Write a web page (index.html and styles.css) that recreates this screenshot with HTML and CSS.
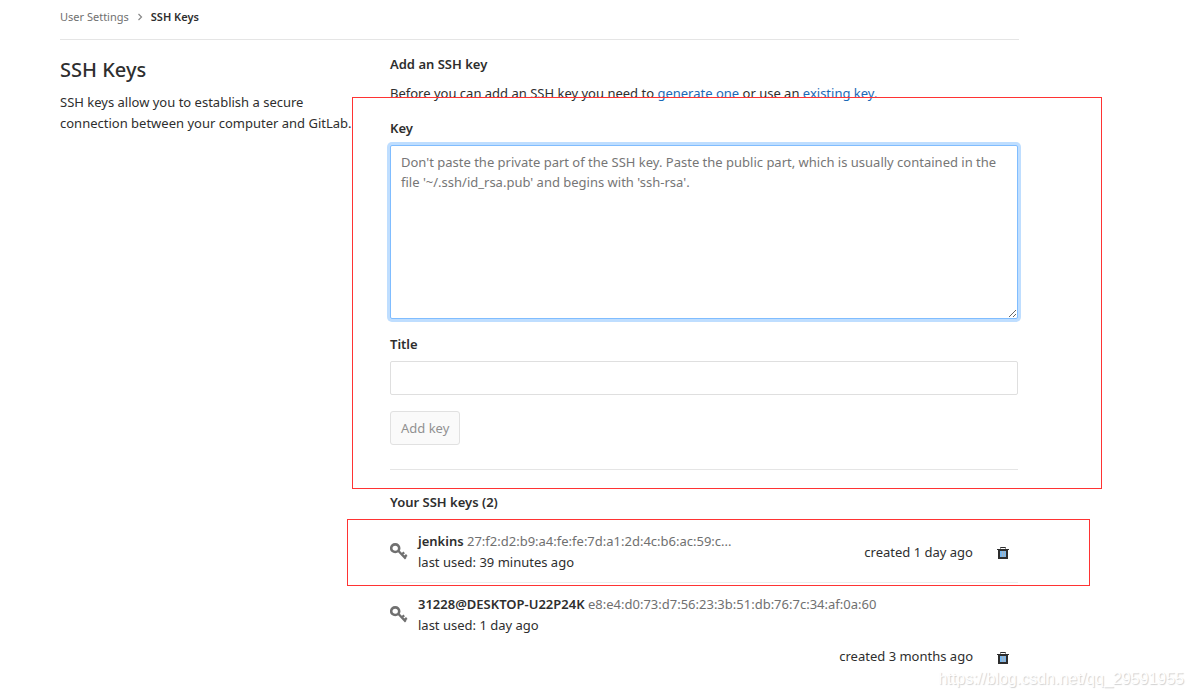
FILE: index.html
```html
<!DOCTYPE html>
<html lang="en">
<head>
<meta charset="utf-8">
<title>SSH Keys · User Settings</title>
<link rel="stylesheet" href="styles.css">
</head>
<body>
<svg class="symbols" aria-hidden="true">
  <symbol id="key" viewBox="0 0 18 18">
    <ellipse cx="5.2" cy="5.2" rx="4" ry="3.8" fill="none" stroke="currentColor" stroke-width="2.6"/>
    <path d="M8 7.5 L15.8 15.6 M11.6 11.6 L14.2 9.4 M14.2 14.2 L16.8 12" fill="none" stroke="currentColor" stroke-width="2.3"/>
  </symbol>
  <symbol id="trash" viewBox="0 0 12 12">
    <path d="M3.5 1.5V.5h5v1" fill="none" stroke="#2e2e2e"/>
    <path d="M2 3h8v8H2z" fill="#78b7ee"/>
    <path d="M5 4h1v6H5zM7 4h1v6H7z" fill="#a5b4c0"/>
    <path d="M0 2h12v1H0zM1 3h10v1H1z" fill="#2e2e2e"/>
    <path d="M1 3h2v9H1zM9 3h2v9H9zM1 10h10v2H1z" fill="#2e2e2e"/>
  </symbol>
</svg>
<div class="page">
  <nav class="breadcrumbs" aria-label="Breadcrumb">
    <a class="crumb" href="#settings">User Settings</a>
    <svg class="chevron" viewBox="0 0 6 8" aria-hidden="true"><path d="M1.5 1l3 3-3 3" fill="none" stroke="#888" stroke-width="1.2"/></svg>
    <a class="crumb current" href="#keys" aria-current="page">SSH Keys</a>
  </nav>
  <main class="row">
    <section class="intro">
      <h1 class="page-title">SSH Keys</h1>
      <p class="text">SSH keys allow you to establish a secure connection between your computer and GitLab.</p>
    </section>
    <section class="content">
      <h2 class="heading">Add an SSH key</h2>
      <p class="text lead">Before you can add an SSH key you need to <a class="link" href="#generate">generate one</a> or use an <a class="link" href="#existing">existing key.</a></p>
      <form class="key-form">
        <div class="field">
          <label class="label" for="key-body">Key</label>
          <textarea class="control key-body" id="key-body" placeholder="Don't paste the private part of the SSH key. Paste the public part, which is usually contained in the file '~/.ssh/id_rsa.pub' and begins with 'ssh-rsa'."></textarea>
        </div>
        <div class="field">
          <label class="label" for="key-title">Title</label>
          <input class="control" id="key-title" type="text">
        </div>
        <button class="button" type="submit" disabled>Add key</button>
        <span class="mark mark-form"></span>
      </form>
      <h2 class="heading list-heading">Your SSH keys (2)</h2>
      <ul class="keys">
        <li class="key">
          <svg class="key-icon" aria-hidden="true"><use href="#key"/></svg>
          <div class="key-info">
            <div><strong class="key-name">jenkins</strong> <span class="fingerprint">27:f2:d2:b9:a4:fe:fe:7d:a1:2d:4c:b6:ac:59:c...</span></div>
            <div>last used: 39 minutes ago</div>
          </div>
          <div class="key-side">
            <span>created 1 day ago</span>
            <button class="remove" type="button" aria-label="Remove jenkins"><svg class="trash" aria-hidden="true"><use href="#trash"/></svg></button>
          </div>
          <span class="mark mark-key"></span>
        </li>
        <li class="key wrapped">
          <svg class="key-icon" aria-hidden="true"><use href="#key"/></svg>
          <div class="key-info">
            <div><strong class="key-name">31228@DESKTOP-U22P24K</strong> <span class="fingerprint">e8:e4:d0:73:d7:56:23:3b:51:db:76:7c:34:af:0a:60</span></div>
            <div>last used: 1 day ago</div>
          </div>
          <div class="key-side">
            <span>created 3 months ago</span>
            <button class="remove" type="button" aria-label="Remove 31228@DESKTOP-U22P24K"><svg class="trash" aria-hidden="true"><use href="#trash"/></svg></button>
          </div>
        </li>
      </ul>
    </section>
  </main>
</div>
<div class="watermark">https://blog.csdn.net/qq_29591955</div>
</body>
</html>
```
FILE: styles.css
```css
* { box-sizing: border-box; }
body {
  margin: 0;
  background: #fff;
  color: #2e2e2e;
  font: 13px/21px "Noto Sans", "Open Sans", sans-serif;
}
.symbols { display: none; }
.page { padding: 0 173px 0 60px; }
.breadcrumbs {
  display: flex;
  align-items: center;
  gap: 8px;
  height: 40px;
  padding-bottom: 6px;
  border-bottom: 1px solid #e5e5e5;
  font-size: 11px;
}
.crumb { color: #707070; text-decoration: none; }
.crumb.current { color: #2e2e2e; font-weight: 600; }
.chevron { width: 6px; height: 8px; }
.row {
  display: grid;
  grid-template-columns: 1fr 2fr;
  margin: 0 -15px 0 -16px;
}
.intro, .content { padding: 14px 16px 0; }
.page-title { margin: 4px 0 10px; font-size: 20px; line-height: 24px; font-weight: 500; }
.text { margin: 0; }
.intro .text { margin-right: -8px; }
.heading { margin: 0 0 8px; font-size: 13px; line-height: 21px; font-weight: 600; }
.link { color: #1b69b6; text-decoration: none; }
.key-form {
  position: relative;
  margin-top: 14px;
  padding-bottom: 24px;
  border-bottom: 1px solid #e5e5e5;
}
.field { margin-bottom: 16px; }
.field:first-child { margin-bottom: 15px; }
.label { display: block; margin-bottom: 7px; font-weight: 600; line-height: 20px; }
.control {
  display: block;
  width: 100%;
  height: 34px;
  padding: 6px 10px;
  border: 1px solid #dfdfdf;
  border-radius: 2px;
  background: #fff;
  color: #2e2e2e;
  font: inherit;
  line-height: 20px;
}
.control::placeholder { color: #767676; opacity: 1; }
.key-body {
  height: 174px;
  border-color: #80bdff;
  outline: 0;
  box-shadow: 0 0 0 3px #bfdeff;
}
.button {
  display: block;
  height: 34px;
  padding: 6px 10px;
  border: 1px solid #e1e1e1;
  border-radius: 3px;
  background: #fafafa;
  color: #919191;
  font: inherit;
  line-height: 20px;
}
.list-heading { margin: 22px 0 18px; }
.keys { margin: 0; padding: 0; list-style: none; }
.key {
  position: relative;
  display: flex;
  align-items: center;
  padding-bottom: 9px;
  border-bottom: 1px solid #eee;
}
.key + .key { padding-top: 11px; border-bottom: 0; }
.key-icon { width: 18px; height: 18px; margin-right: 10px; color: #707070; }
.key-name { font-weight: 600; }
.fingerprint { color: #707070; }
.key-side { display: flex; align-items: center; gap: 24px; margin-left: auto; padding-right: 9px; }
.wrapped { flex-wrap: wrap; row-gap: 10px; }
.wrapped .key-side { width: 100%; justify-content: flex-end; }
.remove { display: flex; padding: 2px 0 0; border: 0; background: none; }
.trash { width: 12px; height: 12px; }
.mark { position: absolute; border: 1px solid #f33; pointer-events: none; }
.mark-form { inset: -21px -84px -20px -38px; }
.mark-key { inset: -12px -72px -4px -43px; }
.watermark {
  position: absolute;
  right: 8px;
  bottom: 8px;
  color: #fff;
  font: 16px/20px "Liberation Sans", Arial, sans-serif;
  text-shadow: 1px 1px 1px #d0d0d0;
}
```
